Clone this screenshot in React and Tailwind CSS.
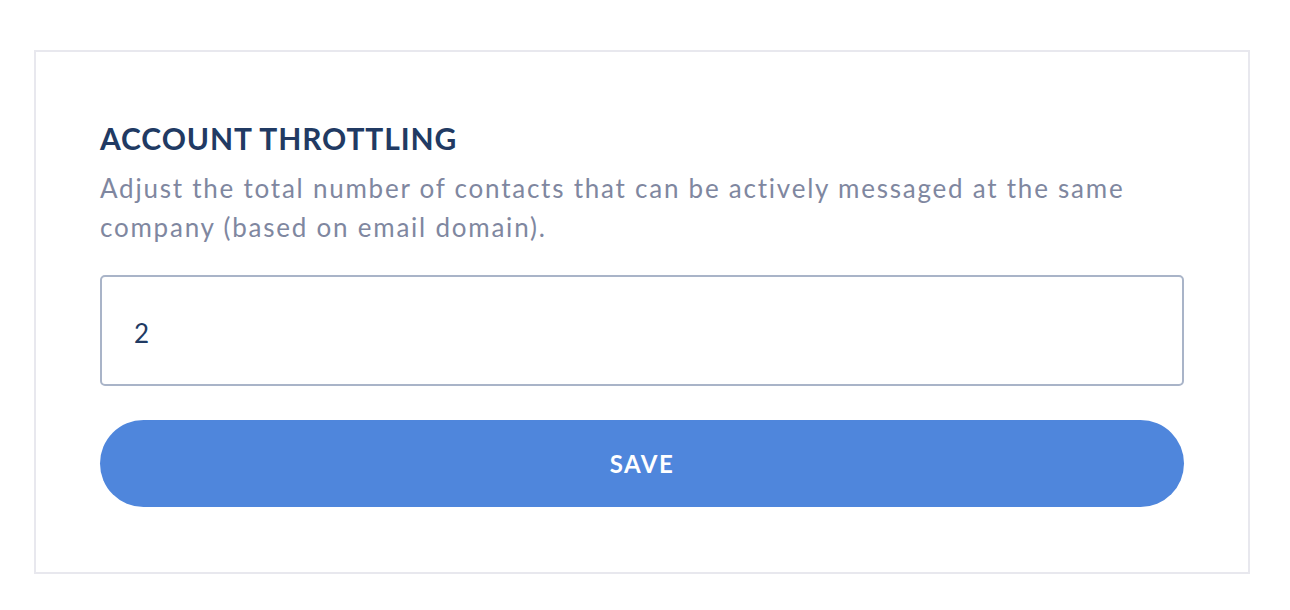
import React, { useState } from 'react';

function App() {
    const [limit, setLimit] = useState("2");

    return (
        <div className="w-[1290px] h-[610px] bg-white pt-[50px] pl-[34px]" style={{ fontFamily: 'Lato, "Noto Sans", sans-serif' }}>
            <div className="w-[1216px] h-[524px] border-2 border-[#e8e8ee] px-16 pt-[66px] pb-[65px]">
                <h2 className="text-[30px] leading-[40px] font-bold tracking-[0.03em] text-[#213a63]">ACCOUNT THROTTLING</h2>
                <p className="mt-[11px] text-[26px] leading-[39px] tracking-[0.068em] text-[#7f87a0]">
                    Adjust the total number of contacts that can be actively messaged at the same company (based on email domain).
                </p>
                <input
                    type="text"
                    value={limit}
                    onChange={e => setLimit(e.target.value)}
                    className="mt-[28px] block w-full h-[111px] rounded-[5px] border-2 border-[#a9b4c8] px-[32px] pt-[4px] text-[26px] text-[#213a63] outline-none"
                />
                <button className="mt-[34px] w-full h-[87px] rounded-full bg-[#4f86dc] text-white text-[24px] font-bold tracking-[0.06em]">
                    SAVE
                </button>
            </div>
        </div>
    );
}

export default App;
